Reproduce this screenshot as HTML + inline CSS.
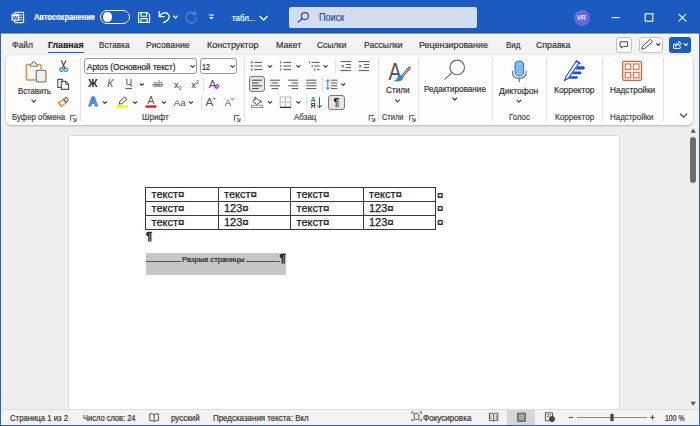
<!DOCTYPE html>
<html lang="ru">
<head>
<meta charset="utf-8">
<title>Word</title>
<style>
*{box-sizing:border-box;margin:0;padding:0}
html,body{width:700px;height:426px;overflow:hidden}
body{position:relative;background:#eee;font-family:"Liberation Sans","DejaVu Sans",sans-serif;font-size:9.5px;color:#333}
.abs{position:absolute}
.t{position:absolute;white-space:nowrap;transform-origin:0 0;color:#333;-webkit-text-stroke:0.2px}
#title{left:0;top:0;width:700px;height:33px;background:#1b5abe}
#titleedge{left:0;top:32px;width:700px;height:2px;background:linear-gradient(#1a55b4 0 50%,#7c9ddb 50% 100%)}
#tabs{left:0;top:34px;width:700px;height:22px;background:#f3f3f3}
#ribbonbg{left:0;top:56px;width:700px;height:72px;background:#f3f3f3}
#ribbon{left:6px;top:55px;width:687px;height:69.5px;background:#fdfdfd;border-radius:5px;box-shadow:0 1px 2.5px rgba(0,0,0,.28)}
.sep{position:absolute;width:1px;background:#e2e2e2}
#doc{left:0;top:128px;width:700px;height:281px;background:#eee}
#page{left:67.5px;top:134.5px;width:552.5px;height:275px;background:#fff;border:1px solid #dadada}
#status{left:0;top:409px;width:700px;height:17px;background:#f3f3f3;border-top:1px solid #dedede}
#bl{left:0;top:33px;width:1px;height:393px;background:#2a62c0}
#br{left:699px;top:33px;width:1px;height:393px;background:#2a62c0}
#bb{left:0;top:425px;width:700px;height:1px;background:#2a62c0}
table{position:absolute;left:145px;top:187px;border-collapse:collapse;font-size:11px;color:#1a1a1a;table-layout:fixed;width:291px;-webkit-text-stroke:0.25px}
td{border:1px solid #3a3a3a;height:13.9px;padding:0 0 0 5.5px;line-height:12px;white-space:nowrap;vertical-align:top;overflow:visible}
.cur{font-size:11.5px;-webkit-text-stroke:0.3px}
svg{position:absolute;left:0;top:0;overflow:visible}
.box{position:absolute;border:1px solid #999;border-radius:3px;background:#fff}
.selbtn{position:absolute;border:1px solid #7a7a7a;border-radius:3px;background:#e6e6e6}
</style>
</head>
<body>
<div id="title" class="abs"></div>
<div id="titleedge" class="abs"></div>
<div class="abs" style="left:289px;top:7px;width:188px;height:21px;background:#d4ddef;border-radius:2px"></div>
<div class="abs" style="left:573.5px;top:10px;width:16px;height:16px;background:#6567dc;border-radius:50%"></div>
<div class="abs" style="left:100px;top:10.3px;width:30.3px;height:13.4px;border:1.2px solid #fff;border-radius:7px"></div>
<div class="abs" style="left:102.8px;top:12.4px;width:9.4px;height:9.4px;background:#fff;border-radius:50%"></div>

<div id="tabs" class="abs"></div>
<div class="abs" style="left:0;top:34px;width:700px;height:1.5px;background:#fafafa"></div>
<div class="abs" style="left:48px;top:51.5px;width:36px;height:1.6px;background:#1b5abe;border-radius:1px"></div>
<div class="abs" style="left:615.5px;top:36.5px;width:16.5px;height:16px;background:#fff;border:1px solid #c4c4c4;border-radius:3px"></div>
<div class="abs" style="left:638.7px;top:36.5px;width:24.3px;height:16px;background:#fff;border:1px solid #c4c4c4;border-radius:3px"></div>
<div class="abs" style="left:668.6px;top:36.5px;width:22px;height:16px;background:#1b5abe;border-radius:3px"></div>

<div id="ribbonbg" class="abs"></div>
<div id="ribbon" class="abs"></div>
<div class="sep" style="left:79.5px;top:58px;height:62.5px"></div>
<div class="sep" style="left:243.8px;top:58px;height:62.5px"></div>
<div class="sep" style="left:377.5px;top:58px;height:62.5px"></div>
<div class="sep" style="left:417.5px;top:58px;height:62.5px"></div>
<div class="sep" style="left:492px;top:58px;height:62.5px"></div>
<div class="sep" style="left:545.5px;top:58px;height:62.5px"></div>
<div class="sep" style="left:601.8px;top:58px;height:62.5px"></div>
<div class="sep" style="left:662.5px;top:58px;height:62.5px"></div>
<div class="sep" style="left:203px;top:77px;height:15px"></div>
<div class="sep" style="left:200.8px;top:95px;height:15px"></div>
<div class="sep" style="left:335px;top:59px;height:15px"></div>
<div class="sep" style="left:321.8px;top:77px;height:15px"></div>
<div class="sep" style="left:305.7px;top:95px;height:15px"></div>
<div class="box" style="left:84.3px;top:58px;width:113px;height:16px"></div>
<div class="box" style="left:199.6px;top:58px;width:37.5px;height:16px"></div>
<div class="selbtn" style="left:248.7px;top:76.3px;width:16.4px;height:16px"></div>
<div class="selbtn" style="left:328.3px;top:94.6px;width:16.4px;height:15.6px"></div>

<div id="doc" class="abs"></div>
<div id="page" class="abs"></div>
<div class="abs" style="left:145.7px;top:252.6px;width:140.6px;height:22px;background:#c6c6c6"></div>
<div class="abs" style="left:145.7px;top:260.6px;width:35.5px;height:1px;background:#555"></div>
<div class="abs" style="left:246px;top:260.6px;width:34px;height:1px;background:#555"></div>
<table>
<tr><td>текст<span class="cur">¤</span></td><td>текст<span class="cur">¤</span></td><td>текст<span class="cur">¤</span></td><td>текст<span class="cur">¤</span></td></tr>
<tr><td>текст<span class="cur">¤</span></td><td>123<span class="cur">¤</span></td><td>текст<span class="cur">¤</span></td><td>123<span class="cur">¤</span></td></tr>
<tr><td>текст<span class="cur">¤</span></td><td>123<span class="cur">¤</span></td><td>текст<span class="cur">¤</span></td><td>123<span class="cur">¤</span></td></tr>
</table>
<span class="t cur" style="left:437px;top:188.5px;font-size:11.5px;line-height:12px;color:#1a1a1a">¤</span>
<span class="t cur" style="left:437px;top:202.4px;font-size:11.5px;line-height:12px;color:#1a1a1a">¤</span>
<span class="t cur" style="left:437px;top:216.3px;font-size:11.5px;line-height:12px;color:#1a1a1a">¤</span>
<span class="t" style="left:146px;top:229.6px;font-size:11px;line-height:12px;font-weight:700;color:#222;-webkit-text-stroke:0.4px">¶</span>
<span class="t" style="left:279.6px;top:252.4px;font-size:11px;line-height:12px;font-weight:700;color:#222;-webkit-text-stroke:0.4px">¶</span>

<div id="status" class="abs"></div>
<div class="abs" style="left:507.4px;top:410px;width:27.5px;height:15px;background:#d6d6d6"></div>
<div class="abs" style="left:689.8px;top:137.3px;width:6.4px;height:45.7px;background:#6e6e6e;border-radius:3.2px"></div>
<div id="bl" class="abs"></div><div id="br" class="abs"></div><div id="bb" class="abs"></div>

<span class="t" style="left:34.3px;top:12.3px;font-size:9.5px;line-height:9.5px;font-weight:700;color:#fff;transform:scaleX(0.782);">Автосохранение</span>
<span class="t" style="left:231.9px;top:12.5px;font-size:9.5px;line-height:9.5px;color:#fff;transform:scaleX(0.839);">табл...</span>
<span class="t" style="left:318.6px;top:12.5px;font-size:10px;line-height:10px;color:#2b4b88;transform:scaleX(0.909);">Поиск</span>
<span class="t" style="left:577.3px;top:15.0px;font-size:6.5px;line-height:6.5px;color:#fff;transform:scaleX(0.963);">VR</span>
<span class="t" style="left:12.0px;top:39.9px;font-size:9.6px;line-height:9.6px;transform:scaleX(0.890);">Файл</span>
<span class="t" style="left:48.0px;top:39.9px;font-size:9.6px;line-height:9.6px;font-weight:700;color:#222;transform:scaleX(0.912);">Главная</span>
<span class="t" style="left:99.0px;top:39.9px;font-size:9.6px;line-height:9.6px;transform:scaleX(0.858);">Вставка</span>
<span class="t" style="left:146.0px;top:39.9px;font-size:9.6px;line-height:9.6px;transform:scaleX(0.902);">Рисование</span>
<span class="t" style="left:207.0px;top:39.9px;font-size:9.6px;line-height:9.6px;transform:scaleX(0.940);">Конструктор</span>
<span class="t" style="left:275.6px;top:39.9px;font-size:9.6px;line-height:9.6px;transform:scaleX(0.935);">Макет</span>
<span class="t" style="left:316.6px;top:39.9px;font-size:9.6px;line-height:9.6px;transform:scaleX(0.870);">Ссылки</span>
<span class="t" style="left:363.6px;top:39.9px;font-size:9.6px;line-height:9.6px;transform:scaleX(0.892);">Рассылки</span>
<span class="t" style="left:419.4px;top:39.9px;font-size:9.6px;line-height:9.6px;transform:scaleX(0.931);">Рецензирование</span>
<span class="t" style="left:505.5px;top:39.9px;font-size:9.6px;line-height:9.6px;transform:scaleX(0.835);">Вид</span>
<span class="t" style="left:535.5px;top:39.9px;font-size:9.6px;line-height:9.6px;transform:scaleX(0.917);">Справка</span>
<span class="t" style="left:17.8px;top:85.7px;font-size:9.4px;line-height:9.4px;transform:scaleX(0.828);">Вставить</span>
<span class="t" style="left:386.3px;top:85.2px;font-size:9.4px;line-height:9.4px;transform:scaleX(0.870);">Стили</span>
<span class="t" style="left:423.7px;top:83.8px;font-size:9.4px;line-height:9.4px;transform:scaleX(0.867);">Редактирование</span>
<span class="t" style="left:499.3px;top:86.0px;font-size:9.4px;line-height:9.4px;transform:scaleX(0.905);">Диктофон</span>
<span class="t" style="left:553.9px;top:85.2px;font-size:9.4px;line-height:9.4px;transform:scaleX(0.897);">Корректор</span>
<span class="t" style="left:609.8px;top:85.2px;font-size:9.4px;line-height:9.4px;transform:scaleX(0.877);">Надстройки</span>
<span class="t" style="left:11.6px;top:113.2px;font-size:9.2px;line-height:9.2px;color:#444;transform:scaleX(0.852);">Буфер обмена</span>
<span class="t" style="left:141.9px;top:113.2px;font-size:9.2px;line-height:9.2px;color:#444;transform:scaleX(0.886);">Шрифт</span>
<span class="t" style="left:293.6px;top:113.2px;font-size:9.2px;line-height:9.2px;color:#444;transform:scaleX(0.869);">Абзац</span>
<span class="t" style="left:381.8px;top:113.2px;font-size:9.2px;line-height:9.2px;color:#444;transform:scaleX(0.809);">Стили</span>
<span class="t" style="left:508.7px;top:113.2px;font-size:9.2px;line-height:9.2px;color:#444;transform:scaleX(0.855);">Голос</span>
<span class="t" style="left:554.6px;top:113.2px;font-size:9.2px;line-height:9.2px;color:#444;transform:scaleX(0.886);">Корректор</span>
<span class="t" style="left:610.3px;top:113.2px;font-size:9.2px;line-height:9.2px;color:#444;transform:scaleX(0.863);">Надстройки</span>
<span class="t" style="left:87.3px;top:61.7px;font-size:9.4px;line-height:9.4px;color:#222;transform:scaleX(0.876);">Aptos (Основной текст)</span>
<span class="t" style="left:202.0px;top:61.7px;font-size:9.4px;line-height:9.4px;color:#222;transform:scaleX(0.766);">12</span>
<span class="t" style="left:182.3px;top:256.3px;font-size:7.8px;line-height:7.8px;color:#222;transform:scaleX(0.977);">Разрыв страницы</span>
<span class="t" style="left:10.0px;top:413.9px;font-size:8.4px;line-height:8.4px;transform:scaleX(0.924);">Страница 1 из 2</span>
<span class="t" style="left:82.5px;top:413.9px;font-size:8.4px;line-height:8.4px;transform:scaleX(0.895);">Число слов: 24</span>
<span class="t" style="left:171.4px;top:413.9px;font-size:8.4px;line-height:8.4px;transform:scaleX(0.951);">русский</span>
<span class="t" style="left:212.9px;top:413.9px;font-size:8.4px;line-height:8.4px;transform:scaleX(0.948);">Предсказания текста: Вкл</span>
<span class="t" style="left:422.9px;top:413.9px;font-size:8.4px;line-height:8.4px;transform:scaleX(0.968);">Фокусировка</span>
<span class="t" style="left:665.3px;top:413.9px;font-size:8.4px;line-height:8.4px;transform:scaleX(0.829);">100 %</span>
<svg width="700" height="426" viewBox="0 0 700 426" font-family="'Liberation Sans','DejaVu Sans',sans-serif">
<g fill="none" stroke="#fff" stroke-width="1.1" stroke-linejoin="round" stroke-linecap="round">
<rect x="14.6" y="12.2" width="9" height="10.4" rx="0.8"/>
<path d="M19.6 15 H22 M19.6 17.4 H22 M19.6 19.8 H22" stroke-width="0.9"/>
<rect x="11.6" y="13.8" width="7.6" height="7" fill="#fff" stroke="none"/>
<path d="M138.6 12.6 H147.4 L149.6 14.8 V22.4 H138.6 Z"/>
<path d="M141 12.8 V16.2 H146.6 V12.8 M141 22.2 V18.6 H147.2 V22.2"/>
<path d="M159.2 11.6 V16.6 H164.2" stroke-width="1.3"/>
<path d="M159.6 16.2 C161.5 12.6 166.4 11.4 168.6 14.6 C170.6 17.8 168 21 163.4 22.6" stroke-width="1.3"/>
</g>
<path d="M173.6 16.0 L175.6 18.0 L177.6 16.0" fill="none" stroke="#fff" stroke-width="1.2" stroke-linecap="round" stroke-linejoin="round"/>
<g fill="none" stroke="#6189d0" stroke-width="1.2" stroke-linecap="round"><path d="M194.8 13.8 A5.3 5.3 0 1 0 196.4 17.6"/><path d="M195.4 11.4 V14.4 H192.4"/></g>
<path d="M209 15 H213.8" stroke="#fff" stroke-width="1.1"/><path d="M209 17 L211.4 19.6 L213.8 17 Z" fill="#fff"/>
<path d="M260.0 16.5 L263.6 20.1 L267.2 16.5" fill="none" stroke="#fff" stroke-width="1.4" stroke-linecap="round" stroke-linejoin="round"/>
<g fill="none" stroke="#2b4b88" stroke-width="1.2" stroke-linecap="round"><circle cx="304.9" cy="16.1" r="3.5"/><path d="M302.3 18.7 L298.2 22"/></g>
<g fill="none" stroke="#fff" stroke-width="1.1"><path d="M611.6 17.6 H619.6"/><rect x="645.2" y="13.8" width="7.6" height="7.4"/><path d="M678.6 13.8 L686.2 21.4 M686.2 13.8 L678.6 21.4"/></g>
<text x="12.5" y="19.6" font-size="5.6" fill="#1b4fa8" font-weight="700" text-anchor="start"  textLength="5.8" lengthAdjust="spacingAndGlyphs">W</text>
<g fill="none" stroke="#444" stroke-width="1" stroke-linejoin="round" stroke-linecap="round">
<path d="M620.4 41.8 H627.6 V46.4 H623.4 L621.6 48 V46.4 H620.4 Z"/>
<path d="M650.4 39.6 L652.6 41.8 L644.6 48.6 L641.8 49.2 L642.6 46.6 Z"/>
</g>
<path d="M656.4 43.7 L658.2 45.5 L660.0 43.7" fill="none" stroke="#444" stroke-width="1.1" stroke-linecap="round" stroke-linejoin="round"/>
<g fill="none" stroke="#fff" stroke-width="1" stroke-linejoin="round" stroke-linecap="round"><path d="M675.6 44.2 H673.6 V48.4 H680.2 V46.6"/><path d="M675.6 46.4 C675.8 44 677 43 679 43 V41.4 L681.4 43.6 L679 45.8 V44.4 C677.4 44.4 676.4 45 675.6 46.4 Z"/></g>
<path d="M684.0 43.7 L685.8 45.5 L687.6 43.7" fill="none" stroke="#fff" stroke-width="1.1" stroke-linecap="round" stroke-linejoin="round"/>
<path d="M30.6 64.6 H27.4 Q26.4 64.6 26.4 65.6 V79 Q26.4 80 27.4 80 H35.6 M37.4 64.6 H40 Q41 64.6 41 65.6 V69.4" fill="none" stroke="#ea8f28" stroke-width="1.5"/>
<path d="M30.4 66.2 V64.6 Q30.4 63.8 31.4 63.8 H32.2 Q32.4 61.6 33.8 61.6 Q35.2 61.6 35.4 63.8 H36.2 Q37.2 63.8 37.2 64.6 V66.2 Z" fill="#fdfdfd" stroke="#6a6a6a" stroke-width="1"/>
<rect x="36.2" y="70.2" width="9.8" height="11.8" rx="1.4" fill="#efefef" stroke="#6a6a6a" stroke-width="1.1"/>
<path d="M31.9 100.2 L33.8 102.2 L35.7 100.2" fill="none" stroke="#444" stroke-width="1.2" stroke-linecap="round" stroke-linejoin="round"/>
<g fill="none" stroke-linecap="round"><path d="M61.4 60.8 L65 68.2 M65.8 60.8 L62.2 68.2" stroke="#444" stroke-width="1.1"/><circle cx="61.4" cy="69.8" r="1.7" stroke="#2b88d8" stroke-width="1.2"/><circle cx="65.8" cy="69.8" r="1.7" stroke="#2b88d8" stroke-width="1.2"/></g>
<g fill="#fdfdfd" stroke="#555" stroke-width="1.1" stroke-linejoin="round"><path d="M57.8 79.4 H62.6 V87.4 H57.8 Z"/><path d="M61.4 81.4 H65.8 L68.6 84.2 V89.4 H61.4 Z"/><path d="M65.6 81.6 V84.4 H68.4" fill="none" stroke-width="0.9"/></g>
<path d="M57.6 102.4 L63.8 98.6 L66.6 103.2 L61 107.4 Z" fill="#f08a24"/>
<path d="M59.8 102.6 L63.4 100.4 L65 103 L61.6 105.4 Z" fill="#fdfdfd"/>
<path d="M63.6 98.8 L66.6 97 L68.4 99.8 L66.4 103 Z" fill="#cfcfcf" stroke="#555" stroke-width="0.9" stroke-linejoin="round"/>
<path d="M75.6 115.6 H70.6 V120.6" fill="none" stroke="#555" stroke-width="1"/>
<path d="M72.8 117.8 L76.0 121.0 M76.19999999999999 118.19999999999999 V121.19999999999999 H73.19999999999999" fill="none" stroke="#555" stroke-width="1"/>
<path d="M190.8 65.6 L192.6 67.4 L194.4 65.6" fill="none" stroke="#444" stroke-width="1.2" stroke-linecap="round" stroke-linejoin="round"/>
<path d="M230.8 65.6 L232.6 67.4 L234.4 65.6" fill="none" stroke="#444" stroke-width="1.2" stroke-linecap="round" stroke-linejoin="round"/>
<text x="88.2" y="87.2" font-size="10.2" fill="#222" font-weight="700" text-anchor="start"  >Ж</text>
<text x="107.2" y="87.2" font-size="10.2" fill="#5a5a5a" font-weight="400" text-anchor="start" font-style="italic" >К</text>
<text x="125.4" y="87.2" font-size="10.2" fill="#555" font-weight="400" text-anchor="start"  >Ч</text>
<path d="M125.4 88.6 H132" stroke="#444" stroke-width="0.9"/>
<path d="M140.1 83.8 L141.8 85.4 L143.5 83.8" fill="none" stroke="#444" stroke-width="1.2" stroke-linecap="round" stroke-linejoin="round"/>
<text x="153.2" y="87.4" font-size="8.6" fill="#666" font-weight="400" text-anchor="start"  >ab</text>
<path d="M152 84.8 H163" stroke="#555" stroke-width="0.8"/>
<text x="174" y="87.6" font-size="9.4" fill="#333" font-weight="400" text-anchor="start"  >x</text>
<text x="178.8" y="89.8" font-size="5" fill="#2b88d8" font-weight="700" text-anchor="start"  >2</text>
<text x="191.2" y="87.6" font-size="9.4" fill="#333" font-weight="400" text-anchor="start"  >x</text>
<text x="196" y="83.8" font-size="5" fill="#2b88d8" font-weight="700" text-anchor="start"  >2</text>
<text x="208.8" y="88.4" font-size="11.4" fill="#555" font-weight="400" text-anchor="start"  >A</text>
<path d="M213.8 87 L217 83.4 L219.8 86 L216.6 89.6 Z" fill="#c03fc4"/><path d="M216 86.6 L217.2 85.3 L218 86 L216.8 87.3 Z" fill="#f3d9f4"/>
<text x="88.4" y="106.4" font-size="12.5" font-weight="700" fill="#f4f9ff" stroke="#2b7cd3" stroke-width="1.1">A</text>
<path d="M103.1 101.8 L104.8 103.4 L106.5 101.8" fill="none" stroke="#444" stroke-width="1.2" stroke-linecap="round" stroke-linejoin="round"/>
<path d="M124.4 97.2 L126.8 99.2 L121.8 103.6 L119.2 104.2 L119.8 101.4 Z" fill="none" stroke="#444" stroke-width="1" stroke-linejoin="round"/>
<rect x="116.4" y="105.4" width="11.6" height="2.3" fill="#ffee00"/>
<path d="M133.5 101.8 L135.2 103.4 L136.9 101.8" fill="none" stroke="#444" stroke-width="1.2" stroke-linecap="round" stroke-linejoin="round"/>
<text x="147.6" y="104.2" font-size="10.2" fill="#555" font-weight="400" text-anchor="start"  >A</text>
<rect x="145.5" y="105.4" width="10.8" height="2.3" fill="#e81123"/>
<path d="M162.2 101.8 L163.9 103.4 L165.6 101.8" fill="none" stroke="#444" stroke-width="1.2" stroke-linecap="round" stroke-linejoin="round"/>
<text x="173.8" y="105.8" font-size="9.6" fill="#555" font-weight="400" text-anchor="start"  textLength="12" lengthAdjust="spacingAndGlyphs">Aa</text>
<path d="M189.3 101.8 L191.0 103.4 L192.7 101.8" fill="none" stroke="#444" stroke-width="1.2" stroke-linecap="round" stroke-linejoin="round"/>
<text x="205.6" y="105.8" font-size="11.6" fill="#555" font-weight="400" text-anchor="start"  >A</text>
<path d="M212.4 99.4 L213.9 97.9 L215.4 99.4" fill="none" stroke="#2b88d8" stroke-width="1"/>
<text x="224.8" y="105.8" font-size="9.6" fill="#555" font-weight="400" text-anchor="start"  >A</text>
<path d="M230.8 98.4 L232.3 99.9 L233.8 98.4" fill="none" stroke="#2b88d8" stroke-width="1"/>
<path d="M239.4 115.6 H234.4 V120.6" fill="none" stroke="#555" stroke-width="1"/>
<path d="M236.6 117.8 L239.8 121.0 M240.0 118.19999999999999 V121.19999999999999 H237.0" fill="none" stroke="#555" stroke-width="1"/>
<rect x="250.8" y="61.5" width="1.8" height="1.8" fill="#2b7cd3"/>
<rect x="250.8" y="65.1" width="1.8" height="1.8" fill="#2b7cd3"/>
<rect x="250.8" y="68.69999999999999" width="1.8" height="1.8" fill="#2b7cd3"/>
<path d="M254.4 62.4 H262 M254.4 66 H262 M254.4 69.6 H262" stroke="#555" stroke-width="1" fill="none"/>
<path d="M268.3 65.6 L270.0 67.2 L271.7 65.6" fill="none" stroke="#444" stroke-width="1.2" stroke-linecap="round" stroke-linejoin="round"/>
<rect x="280.2" y="61.199999999999996" width="1" height="2.4" fill="#2b7cd3"/>
<rect x="280.2" y="64.8" width="1" height="2.4" fill="#2b7cd3"/>
<rect x="280.2" y="68.39999999999999" width="1" height="2.4" fill="#2b7cd3"/>
<path d="M283.4 62.4 H291 M283.4 66 H291 M283.4 69.6 H291" stroke="#555" stroke-width="1" fill="none"/>
<path d="M296.7 65.6 L298.4 67.2 L300.1 65.6" fill="none" stroke="#444" stroke-width="1.2" stroke-linecap="round" stroke-linejoin="round"/>
<rect x="309" y="61.4" width="1" height="2.2" fill="#2b7cd3"/><rect x="311.6" y="65" width="1" height="2.2" fill="#2b7cd3"/><rect x="314.2" y="68.6" width="1" height="2.2" fill="#2b7cd3"/>
<path d="M311.6 62.4 H319.6" stroke="#555" stroke-width="1" fill="none"/>
<path d="M314.2 66 H319.6" stroke="#555" stroke-width="1" fill="none"/>
<path d="M316.8 69.6 H319.6" stroke="#555" stroke-width="1" fill="none"/>
<path d="M323.9 65.6 L325.6 67.2 L327.3 65.6" fill="none" stroke="#444" stroke-width="1.2" stroke-linecap="round" stroke-linejoin="round"/>
<path d="M340.4 61.6 H351 M340.4 70.6 H351" stroke="#555" stroke-width="1" fill="none"/>
<path d="M345.6 64.6 H351 M345.6 67.6 H351" stroke="#555" stroke-width="1" fill="none"/>
<path d="M343.6 64.4 V67.8 L341 66.1 Z" fill="#2b7cd3"/>
<path d="M358.6 61.6 H369.2 M358.6 70.6 H369.2" stroke="#555" stroke-width="1" fill="none"/>
<path d="M363.8 64.6 H369.2 M363.8 67.6 H369.2" stroke="#555" stroke-width="1" fill="none"/>
<path d="M359.4 64.4 V67.8 L362 66.1 Z" fill="#2b7cd3"/>
<path d="M252 80.2 H262 M252 83 H258.6 M252 85.8 H262 M252 88.6 H258.6" stroke="#444" stroke-width="1"/>
<path d="M269.8 80.2 H280 M271.6 83 H278.2 M269.8 85.8 H280 M271.6 88.6 H278.2" stroke="#555" stroke-width="1"/>
<path d="M288.2 80.2 H298.2 M291.6 83 H298.2 M288.2 85.8 H298.2 M291.6 88.6 H298.2" stroke="#555" stroke-width="1"/>
<path d="M306.2 80.2 H316.4 M306.2 83 H316.4 M306.2 85.8 H316.4 M306.2 88.6 H316.4" stroke="#555" stroke-width="1" fill="none"/>
<path d="M330.8 80.2 H337.4 M330.8 83 H337.4 M330.8 85.8 H337.4 M330.8 88.6 H337.4" stroke="#555" stroke-width="1" fill="none"/>
<path d="M327.8 80 V89" stroke="#2b7cd3" stroke-width="1"/><path d="M326.2 81.6 L327.8 79.6 L329.4 81.6 M326.2 87.4 L327.8 89.4 L329.4 87.4" fill="none" stroke="#2b7cd3" stroke-width="1"/>
<path d="M341.5 83.8 L343.2 85.4 L344.9 83.8" fill="none" stroke="#444" stroke-width="1.2" stroke-linecap="round" stroke-linejoin="round"/>
<path d="M255.4 97.4 L260.6 101.8 L256.8 104.6 L253 101.4 Z" fill="none" stroke="#555" stroke-width="1" stroke-linejoin="round"/><path d="M260.4 99.6 Q262.6 101.6 261.4 103 Q260 103.4 260 101.6 Z" fill="#2b7cd3"/><path d="M255.2 96.6 V100" stroke="#555" stroke-width="0.9"/>
<rect x="251.6" y="105.2" width="11.2" height="2.4" fill="#fdfdfd" stroke="#777" stroke-width="0.8"/>
<path d="M268.3 101.6 L270.0 103.2 L271.7 101.6" fill="none" stroke="#444" stroke-width="1.2" stroke-linecap="round" stroke-linejoin="round"/>
<rect x="280.2" y="97" width="10.6" height="10.4" fill="none" stroke="#b5b5b5" stroke-width="1"/><path d="M285.5 97 V107.4 M280.2 102.2 H290.8" stroke="#b5b5b5" stroke-width="0.9"/><path d="M280 107.4 H291" stroke="#333" stroke-width="1.3"/>
<path d="M296.7 101.6 L298.4 103.2 L300.1 101.6" fill="none" stroke="#444" stroke-width="1.2" stroke-linecap="round" stroke-linejoin="round"/>
<text x="310.6" y="102" font-size="7" fill="#2b7cd3" font-weight="700" text-anchor="start"  >А</text>
<text x="310.6" y="108.4" font-size="7" fill="#333" font-weight="700" text-anchor="start"  >Я</text>
<path d="M319.4 97.2 V107.6 M317.2 105.4 L319.4 107.8 L321.6 105.4" fill="none" stroke="#444" stroke-width="1"/>
<text x="336.5" y="106.2" font-size="10.5" fill="#222" font-weight="700" text-anchor="middle"  >¶</text>
<path d="M374.2 115.6 H369.2 V120.6" fill="none" stroke="#555" stroke-width="1"/>
<path d="M371.4 117.8 L374.59999999999997 121.0 M374.8 118.19999999999999 V121.19999999999999 H371.8" fill="none" stroke="#555" stroke-width="1"/>
<text x="388.4" y="79.8" font-size="23" fill="#505050" font-weight="400" text-anchor="start"  textLength="13" lengthAdjust="spacingAndGlyphs">A</text>
<path d="M409.4 67.8 L402.4 76" stroke="#555" stroke-width="2.6" stroke-linecap="round"/>
<path d="M409.4 67.8 L402.6 75.8" stroke="#e4e4e4" stroke-width="1" stroke-linecap="round"/>
<path d="M402.4 75.6 Q404.2 78.2 401.8 80.2 Q398.2 82.6 393.8 80.8 Q397 79.8 397.6 77.6 Q398.6 74.6 402.4 75.6 Z" fill="#2b88d8"/>
<path d="M395.5 99.8 L397.4 101.8 L399.3 99.8" fill="none" stroke="#444" stroke-width="1.2" stroke-linecap="round" stroke-linejoin="round"/>
<path d="M414.6 115.6 H409.6 V120.6" fill="none" stroke="#555" stroke-width="1"/>
<path d="M411.8 117.8 L415.0 121.0 M415.20000000000005 118.19999999999999 V121.19999999999999 H412.20000000000005" fill="none" stroke="#555" stroke-width="1"/>
<g fill="none" stroke="#666" stroke-width="1.1" stroke-linecap="round"><circle cx="457.2" cy="67.4" r="7.3"/><path d="M451.8 72.8 L444.8 79.2"/></g>
<path d="M452.9 98.0 L454.8 100.0 L456.7 98.0" fill="none" stroke="#444" stroke-width="1.2" stroke-linecap="round" stroke-linejoin="round"/>
<rect x="515" y="61" width="8.6" height="15.2" rx="4.3" fill="#84b9ec" stroke="#2b7cd3" stroke-width="1.1"/>
<path d="M512.4 71.4 Q512.4 78.4 519.3 78.4 Q526.2 78.4 526.2 71.4 M519.3 78.4 V81.8" fill="none" stroke="#666" stroke-width="1.1" stroke-linecap="round"/>
<path d="M517.1 100.2 L519.0 102.2 L520.9 100.2" fill="none" stroke="#444" stroke-width="1.2" stroke-linecap="round" stroke-linejoin="round"/>
<g fill="none" stroke="#1d4ed0" stroke-linecap="round" stroke-linejoin="round"><path d="M576.4 61 L566.2 76.2 L564.4 80.6 L568.2 78.4 L578.2 64" stroke-width="1.1"/><path d="M576.4 61 L579.8 63.5" stroke-width="1.7"/></g>
<path d="M577.6 66.2 H583.4 Q584.8 66.2 584.8 67.8 Q584.8 69.4 583.4 69.4 H575.4 Z M574 71.4 H580.2 Q581.4 71.4 581.4 72.8 Q581.4 74.2 580.2 74.2 H572 Z M570.6 76.2 H576.6 Q577.8 76.2 577.8 77.5 Q577.8 78.8 576.6 78.8 H568.6 Z" fill="#1d4ed0"/>
<rect x="622.6" y="61.4" width="19" height="19" rx="1.6" fill="#fdece6" stroke="#e2603a" stroke-width="1.2"/>
<rect x="625.2" y="64" width="5.4" height="5.4" fill="#fdfdfd" stroke="#e2603a" stroke-width="1"/>
<rect x="633.6" y="64" width="5.4" height="5.4" fill="#fdfdfd" stroke="#e2603a" stroke-width="1"/>
<rect x="625.2" y="72.4" width="5.4" height="5.4" fill="#fdfdfd" stroke="#e2603a" stroke-width="1"/>
<rect x="633.6" y="72.4" width="5.4" height="5.4" fill="#fdfdfd" stroke="#e2603a" stroke-width="1"/>
<path d="M680.4 114.0 L683.6 117.2 L686.8 114.0" fill="none" stroke="#444" stroke-width="1.2" stroke-linecap="round" stroke-linejoin="round"/>
<path d="M690.6 132.8 L693.2 128.6 L695.8 132.8 Z" fill="#5a5a5a"/>
<path d="M690.4 401.8 L693.2 405.8 L696 401.8 Z" fill="#5a5a5a"/>
<g fill="none" stroke="#444" stroke-width="0.9" stroke-linejoin="round">
<path d="M154.1 414.6 V421.4 M154.1 414.6 Q152 413.4 149.8 413.8 V420.6 Q152 420.2 154.1 421.4 Q156.2 420.2 158.4 420.6 V413.8 Q156.2 413.4 154.1 414.6"/>
<path d="M411.8 413.8 V412 H413.6 M419.6 412 H421.4 V413.8 M421.4 418.8 V420.6 H419.6 M413.6 420.6 H411.8 V418.8"/>
<path d="M414.2 413.4 H417.4 L419 415 V419.4 H414.2 Z"/>
<path d="M493.6 414 V421 M493.6 414 Q491.6 412.8 489.4 413.2 V420.4 Q491.6 420 493.6 421 Q495.6 420 497.8 420.4 V413.2 Q495.6 412.8 493.6 414"/><path d="M491 415.2 V419 M496.2 415.2 V419" stroke-width="0.7"/>
<rect x="517.6" y="413.2" width="7.8" height="8.2" fill="#8a8a8a" stroke="#555"/><path d="M519 415.2 H524 M519 417.2 H524 M519 419.2 H524" stroke="#d6d6d6" stroke-width="0.7"/>
<path d="M545.4 412.8 H552.6 V417 M545.4 412.8 V420.8 H549.4"/><path d="M546.8 414.8 H551.2 M546.8 416.6 H549.4" stroke-width="0.7"/><circle cx="552" cy="419" r="2.6" fill="#444"/>
</g>
<path d="M568.8 417.4 H573" stroke="#444" stroke-width="1"/>
<path d="M577 417.5 H647.4" stroke="#8a8a8a" stroke-width="1"/>
<rect x="610.4" y="413.8" width="3.2" height="7.4" fill="#444"/>
<path d="M650.2 417.4 H654.6 M652.4 415.2 V419.6" stroke="#444" stroke-width="1"/>
</svg>
</body>
</html>
